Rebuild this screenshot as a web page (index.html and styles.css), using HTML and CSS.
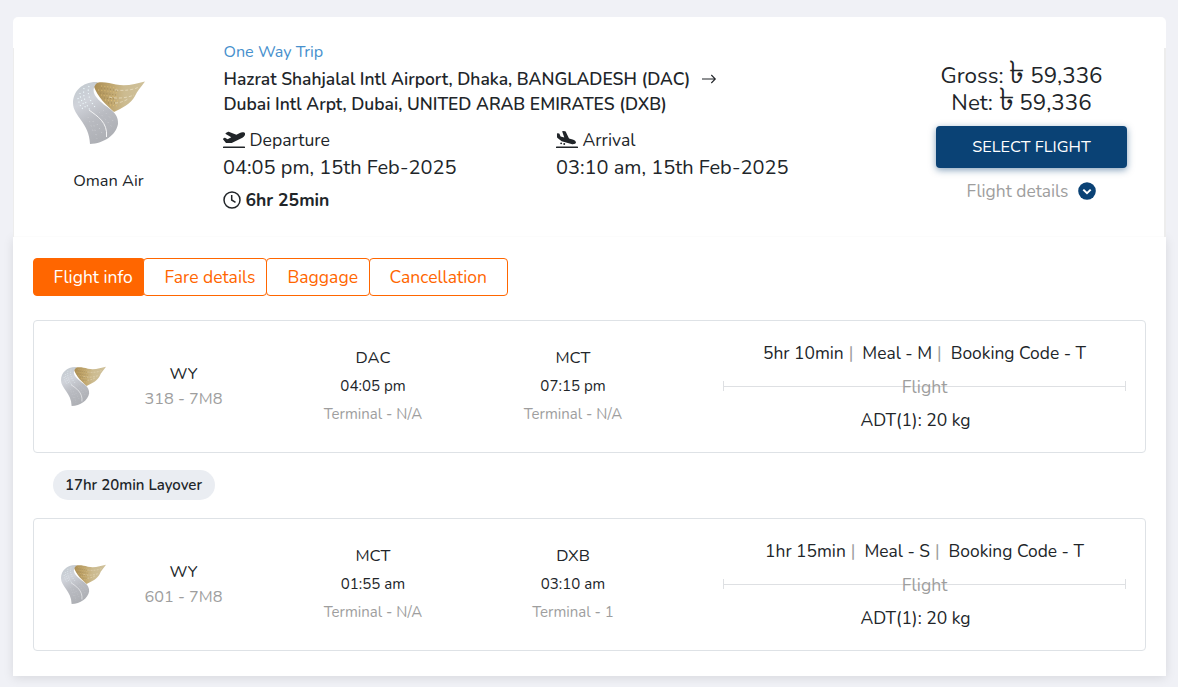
FILE: index.html
```html
<!DOCTYPE html>
<html lang="en">
<head>
<meta charset="utf-8">
<title>Flight results</title>
<link rel="stylesheet" href="styles.css">
</head>
<body>
<svg width="0" height="0" class="defs" aria-hidden="true">
  <defs>
    <linearGradient id="silver" x1="0.2" y1="0" x2="0.6" y2="1"><stop offset="0" stop-color="#c3cad0"/><stop offset=".3" stop-color="#d0d3da"/><stop offset=".6" stop-color="#b9bbc1"/><stop offset="1" stop-color="#adafb4"/></linearGradient>
    <linearGradient id="gold" x1="0" y1="0" x2="1" y2="0"><stop offset="0" stop-color="#a98b50"/><stop offset=".4" stop-color="#c3ab75"/><stop offset=".6" stop-color="#ccbb90"/><stop offset="1" stop-color="#cfc19b"/></linearGradient>
    <symbol id="wing" viewBox="0 0 72 64">
      <path fill="url(#gold)" d="M20 3C26 0 35 1 43 3.500C53 5.500 63 3 72 .5C68 6 64 10 62 15C58 23 49 27 41 31C34 24 25 18 20 3Z"/>
      <path fill="none" stroke="#e8ddc0" stroke-width=".8" stroke-dasharray="3 2" d="M42 9C52 10 60 9 66 6M36 16C44 18 54 17 61 14M42 22Q48 22 55 18"/>
      <path fill="none" stroke="#e0bf74" stroke-width="1" stroke-dasharray="1 2" d="M28 5Q40 6 46 8M25 9Q36 10 45 12M28 14Q36 15 46 16M32 19L45 20M37 24L45 25"/>
      <path fill="none" stroke="#a58a52" stroke-width="1" stroke-dasharray="1 2" d="M28 7Q38 8 44 10M27 12Q36 13 43 14M31 17L42 18M35 22L42 22"/>
      <path fill="url(#silver)" d="M25 1C10 0 0 10 0 22C0 35 16.500 42 17 63C31 62.500 43 54 45 43C46 31 34 27 28 21C21 15 17 8 25 1Z"/>
      <path fill="none" stroke="#f4f4f5" stroke-width="1" d="M16 29C24 35 35 41 33.500 56"/>
      <path fill="none" stroke="#eef9fc" stroke-width="1.100" stroke-dasharray="1.100 2.500" d="M7 12Q7 19 13 27M11 7Q9 18 17 29M16 5Q13 15 22 26M5 17Q6 24 10 28"/>
      <path fill="none" stroke="#cccdd2" stroke-width="1" stroke-dasharray="1 3.500" d="M20 40L24 58M26 31L40 47M24 43L30 54M30 29L42 42M15 36L20 50"/>
    </symbol>
  </defs>
</svg>

<main class="card">
  <section class="summary">
    <div class="airline">
      <svg class="airline-logo"><use href="#wing"/></svg>
      <div class="airline-name">Oman Air</div>
    </div>
    <div class="trip">
      <div class="trip-type">One Way Trip</div>
      <div class="route">Hazrat Shahjalal Intl Airport, Dhaka, BANGLADESH (DAC)
        <svg class="arrow" viewBox="0 0 16 16"><path d="M1 8H14M10.300 4L14.300 8L10.300 12"/></svg>
      </div>
      <div class="route">Dubai Intl Arpt, Dubai, UNITED ARAB EMIRATES (DXB)</div>
      <div class="times">
        <div>
          <div class="label"><svg class="plane" viewBox="0 0 640 512"><path d="M624 448H16c-9 0-16 7-16 16v32c0 9 7 16 16 16h608c9 0 16-7 16-16v-32c0-9-7-16-16-16zM81 341c6 7 15 11 24 11l132-1c11 0 22-3 31-7l297-151c27-14 51-34 65-61 15-30 17-52 8-67-8-15-27-26-61-28-30-2-60 5-87 19L389 107 166 24a16 16 0 0 0-16 1L83 59c-11 6-13 20-4 28l161 97-106 54-75-38a16 16 0 0 0-15 0L9 218c-10 6-12 20-4 28l76 95z"/></svg>Departure</div>
          <div class="time">04:05 pm, 15th Feb-2025</div>
        </div>
        <div>
          <div class="label"><svg class="plane" viewBox="0 0 640 512"><path d="M624 448H16c-9 0-16 7-16 16v32c0 9 7 16 16 16h608c9 0 16-7 16-16v-32c0-9-7-16-16-16zM44 205l102 82c5 4 11 7 18 9l283 80c27 7 56 9 83 2 31-8 46-22 49-35 4-14-1-33-23-56-20-20-45-35-73-43l-104-29L281 18c-2-6-7-10-13-11L200 0c-10-1-20 6-17 19l58 171-107-30-31-75c-2-5-6-8-11-10L48 64c-10-3-20 5-20 15l1 94c1 13 6 24 15 32z"/><circle cx="150" cy="360" r="28"/><circle cx="240" cy="380" r="28"/></svg>Arrival</div>
          <div class="time">03:10 am, 15th Feb-2025</div>
        </div>
      </div>
      <div class="duration"><svg class="clock" viewBox="0 0 18 18"><circle cx="9" cy="9" r="8"/><path d="M8.700 4V9L12.500 11.300"/></svg>6hr 25min</div>
    </div>
    <div class="fare">
      <div class="price">Gross: <span class="taka">৳</span> 59,336</div>
      <div class="price">Net: <span class="taka">৳</span> 59,336</div>
      <button class="select">SELECT FLIGHT</button>
      <div class="details-link">Flight details <svg class="chevron" viewBox="0 0 18 18"><circle cx="9" cy="9" r="8.800"/><path d="M5.300 7.600L9 11.200L12.700 7.600"/></svg></div>
    </div>
  </section>

  <section class="details">
    <nav class="tabs">
      <a class="tab active">Flight info</a><a class="tab">Fare details</a><a class="tab">Baggage</a><a class="tab last">Cancellation</a>
    </nav>

    <article class="segment">
      <svg class="segment-logo"><use href="#wing"/></svg>
      <div class="number"><div>WY</div><div class="muted">318 - 7M8</div></div>
      <div class="stop"><div class="code">DAC</div><div>04:05 pm</div><div class="terminal">Terminal - N/A</div></div>
      <div class="stop"><div class="code">MCT</div><div>07:15 pm</div><div class="terminal">Terminal - N/A</div></div>
      <div class="info">
        <div class="facts"><span>5hr 10min</span><i>|</i><span>Meal - M</span><i>|</i><span>Booking Code - T</span></div>
        <div class="line">Flight</div>
        <div class="bags">ADT(1): 20 kg</div>
      </div>
    </article>

    <div class="layover">17hr 20min Layover</div>

    <article class="segment">
      <svg class="segment-logo"><use href="#wing"/></svg>
      <div class="number"><div>WY</div><div class="muted">601 - 7M8</div></div>
      <div class="stop"><div class="code">MCT</div><div>01:55 am</div><div class="terminal">Terminal - N/A</div></div>
      <div class="stop"><div class="code">DXB</div><div>03:10 am</div><div class="terminal">Terminal - 1</div></div>
      <div class="info">
        <div class="facts"><span>1hr 15min</span><i>|</i><span>Meal - S</span><i>|</i><span>Booking Code - T</span></div>
        <div class="line">Flight</div>
        <div class="bags">ADT(1): 20 kg</div>
      </div>
    </article>
  </section>
</main>
</body>
</html>
```
FILE: styles.css
```css
* { box-sizing: border-box; }
body {
  margin: 0;
  padding: 17px 12px 0 13px;
  height: 687px;
  overflow: hidden;
  background: #f0f1f6;
  color: #212529;
  font-family: Nunito, Lato, sans-serif;
  font-size: 17.6px;
}
.defs { display: block; }
.card { height: 659px; }
.summary {
  display: flex;
  position: relative;
  z-index: 1;
  height: 220px;
  background: linear-gradient(#ededed, #ededed) 0 31px / 1px 189px no-repeat,
    linear-gradient(#ededed, #ededed) 100% 31px / 2px 189px no-repeat,
    linear-gradient(#fcfcfc, #fcfcfc) 0 100% / 100% 1px no-repeat, #fff;
  border-radius: 5px 5px 0 0;
}
.airline { width: 191px; padding-top: 64px; text-align: center; }
.airline-logo { display: block; width: 72px; height: 64px; margin-left: 60px; }
.airline-name { margin-top: 24px; font-size: 16.4px; line-height: 24px; }
.trip { flex-shrink: 0; width: 669px; padding: 23px 0 0 18.5px; }
.trip-type { padding-left: 1px; color: #4790cd; font-size: 16.2px; line-height: 24px; }
.route { height: 25px; padding-left: 1px; line-height: 25px; font-weight: 600; white-space: nowrap; font-size: 17.47px; }
.trip-type + .route { margin-top: 3px; }
.arrow { width: 16px; height: 16px; margin-left: 6px; vertical-align: -2px; fill: none; stroke: #212529; stroke-width: 1.1; }
.times { display: grid; grid-template-columns: 333px 300px; margin-top: 9px; }
.label { display: flex; align-items: center; height: 27px; }
.plane { width: 22px; height: 17.6px; margin-right: 5px; fill: #212529; }
.time { padding: 1px 0 0 .5px; font-size: 20px; line-height: 28px; }
.duration { display: flex; align-items: center; height: 30px; margin-top: 3px; font-weight: 700; }
.clock { width: 18px; height: 18px; margin-right: 5px; fill: none; stroke: #212529; stroke-width: 1.5; }
.fare { width: 191px; margin-left: 63px; padding-top: 45px; text-align: center; }
.price { height: 27px; padding-right: 20px; line-height: 27px; font-size: 22.4px; white-space: nowrap; }
.taka { font-size: 31px; line-height: 0; }
.select {
  display: block;
  width: 191px;
  height: 42px;
  margin: 10px 0 0;
  padding: 0;
  border: 0;
  border-radius: 4px;
  background: #0a4275;
  box-shadow: 0 2px 7px rgba(10, 66, 117, .5);
  color: #fff;
  font: 16.3px/42px Nunito, Lato, sans-serif;
}
.details-link { display: flex; align-items: center; justify-content: center; height: 28px; margin-top: 9px; color: #9e9e9e; font-size: 17.4px; }
.chevron { width: 18px; height: 18px; margin-left: 10px; fill: #0a4275; }
.chevron path { fill: none; stroke: #fff; stroke-width: 2; }
.details {
  height: 439px;
  padding: 21px 20px 0;
  background: #fff;
  box-shadow: 0 2px 10px rgba(0, 0, 0, .1);
}
.tabs { display: flex; height: 38px; }
.tab {
  width: 124px;
  height: 38px;
  margin-right: -1px;
  padding-left: 20.5px;
  border: 1px solid #f60;
  border-radius: 4px;
  background: #fff;
  color: #f60;
  font-size: 17.5px;
  line-height: 36px;
}
.tab.active { width: 112px; margin-right: -2px; padding-left: 19.5px; background: #f60; color: #fff; }
.tab:nth-child(3) { width: 104px; }
.tab.last { width: 139px; padding-left: 19.5px; }
.segment {
  display: flex;
  height: 133px;
  margin-top: 24px;
  border: 1px solid #dee2e6;
  border-radius: 4px;
}
.segment-logo { width: 45px; height: 41px; margin: 45px 0 0 27px; }
.number { width: 155px; margin-right: 12px; padding-top: 41px; text-align: center; font-size: 16.3px; line-height: 25px; }
.muted, .terminal { color: #9e9e9e; }
.stop { width: 200px; padding-top: 23px; text-align: center; font-size: 15.1px; line-height: 28px; }
.terminal { font-size: 15px; }
.code { font-size: 16.5px; }
.info { width: 403px; margin-left: 50px; padding-top: 20px; text-align: center; }
.facts { display: flex; justify-content: center; height: 25px; line-height: 25px; font-size: 17.4px; white-space: nowrap; }
.facts i { margin: 0 9px 0 5px; color: #9e9e9e; font-style: normal; }
.line {
  height: 26px;
  margin-top: 8px;
  background: linear-gradient(#dee0e3, #dee0e3) 0 12px / 100% 1px no-repeat,
    linear-gradient(#dee0e3, #dee0e3) 0 7px / 1px 10px no-repeat,
    linear-gradient(#dee0e3, #dee0e3) 100% 7px / 1px 10px no-repeat;
  color: #9e9e9e;
  line-height: 26px;
}
.bags { margin-top: 8px; padding-right: 18px; font-size: 17.5px; line-height: 25px; }
.layover {
  width: 162px;
  height: 30px;
  margin: 17px 0 -6px 20px;
  padding-right: 1px;
  border-radius: 15px;
  background: #eaedf2;
  font-size: 15px;
  font-weight: 600;
  line-height: 30px;
  text-align: center;
}
```
